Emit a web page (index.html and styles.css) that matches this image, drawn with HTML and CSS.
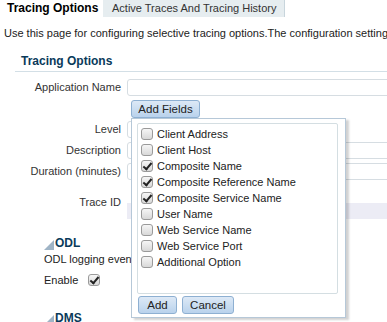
FILE: index.html
```
<!DOCTYPE html>
<html lang="en">
<head>
	<meta charset="UTF-8">
	<title>Tracing Options</title>
	<link rel="stylesheet" href="styles.css">
</head>
<body>
	<div class="tabs">
		<div class="tab active">Tracing Options</div>
		<div class="tab">Active Traces And Tracing History</div>
	</div>
	<p class="intro">Use this page for configuring selective tracing options.The configuration settings are applied to new requests.</p>

	<div class="section">
		<h2 class="sectionTitle">Tracing Options</h2>
		<div class="form">
			<label class="lbl">Application Name</label>
			<div class="field"><div class="input wide"></div></div>

			<div class="lbl"></div>
			<div class="field addRow">
				<button class="btn addFields">Add Fields</button>
				<!-- popup over the form -->
				<div class="popup">
					<ul class="fieldList">
						<li><span class="cb"></span>Client Address</li>
						<li><span class="cb"></span>Client Host</li>
						<li><span class="cb on"></span>Composite Name</li>
						<li><span class="cb on"></span>Composite Reference Name</li>
						<li><span class="cb on"></span>Composite Service Name</li>
						<li><span class="cb"></span>User Name</li>
						<li><span class="cb"></span>Web Service Name</li>
						<li><span class="cb"></span>Web Service Port</li>
						<li><span class="cb"></span>Additional Option</li>
					</ul>
					<div class="popBtns">
						<button class="btn small">Add</button>
						<button class="btn small">Cancel</button>
					</div>
				</div>
			</div>

			<label class="lbl">Level</label>
			<div class="field"><div class="input narrow"></div></div>

			<label class="lbl">Description</label>
			<div class="field"><div class="input wide"></div></div>

			<label class="lbl">Duration (minutes)</label>
			<div class="field"><div class="input wide"></div></div>

			<label class="lbl trace">Trace ID</label>
			<div class="field traceField"><div class="traceBand"></div></div>
		</div>

		<div class="sub">
			<h3 class="subTitle"><svg width="10" height="10" viewBox="0 0 10 10"><polygon points="0,10 10,0 10,10" fill="#9fb4c6"/></svg>ODL</h3>
			<p class="subText">ODL logging events will be written to the server log.</p>
			<div class="enable">Enable <span class="cb on"></span></div>
		</div>

		<div class="sub dms">
			<h3 class="subTitle"><svg width="10" height="10" viewBox="0 0 10 10"><polygon points="0,10 10,0 10,10" fill="#9fb4c6"/></svg>DMS</h3>
		</div>
	</div>
</body>
</html>
```

FILE: styles.css
```
*{
	margin: 0;
	padding: 0;
	box-sizing: border-box;
}
body{
	width: 387px;
	height: 322px;
	overflow: hidden;
	background: #fff;
	font-family: "Liberation Sans", Arial, sans-serif;
	font-size: 11px;
	color: #333;
}
.tabs{
	display: flex;
	height: 17px;
}
.tab{
	flex: none;
	height: 17px;
	line-height: 17px;
	padding: 0 8px 0 9px;
	background: #e6edf0;
	border-right: 1px solid #c8d5dc;
	color: #333;
	font-size: 11px;
	white-space: nowrap;
}
.tab.active{
	width: 103px;
	background: #fff;
	border-right: none;
	font-weight: bold;
	font-size: 12px;
	color: #000;
	padding: 0 0 0 7px;
}
.intro{
	margin-top: 9px;
	padding-left: 4px;
	height: 14px;
	line-height: 14px;
	white-space: nowrap;
	overflow: hidden;
	color: #222;
}
.section{
	margin-top: 14px;
	padding-left: 15px;
}
.sectionTitle{
	height: 18px;
	padding-left: 6px;
	line-height: 14px;
	font-size: 12px;
	font-weight: bold;
	color: #0a3a5a;
	border-bottom: 1px solid #d3dfe6;
}
.form{
	display: grid;
	grid-template-columns: 106px 1fr;
	column-gap: 6px;
	row-gap: 4px;
	margin-top: 7px;
}
.lbl{
	text-align: right;
	height: 17px;
	line-height: 17px;
	color: #333;
	white-space: nowrap;
}
.field{
	height: 17px;
}
.input{
	height: 17px;
	border: 1px solid #d6dde2;
	border-radius: 3px;
	background: #fff;
}
.input.wide{
	width: 300px;
}
.input.narrow{
	width: 60px;
}
.addRow{
	position: relative;
}
.btn{
	font-family: "Liberation Sans", Arial, sans-serif;
	font-size: 11.5px;
	color: #222;
	height: 18px;
	line-height: 15px;
	border: 1px solid #8eb0d2;
	border-radius: 3px;
	background: linear-gradient(#dde9f6, #b9d2ec);
	padding: 0;
	white-space: nowrap;
}
.addFields{
	position: relative;
	z-index: 2;
	margin-left: 4px;
	width: 69px;
}
.popup{
	position: absolute;
	z-index: 1;
	left: 4px;
	top: 18px;
	width: 215px;
	height: 200px;
	background: #fff;
	border: 1px solid #b6c8d8;
	box-shadow: 3px 2px 2px rgba(0,0,0,0.18);
	padding: 4px 7px 0 5px;
}
.fieldList{
	list-style: none;
	height: 171px;
	border: 1px solid #d4dee2;
	border-radius: 2px;
	padding: 2px 0 0 3px;
}
.fieldList li{
	display: flex;
	align-items: center;
	gap: 4px;
	height: 16px;
	font-size: 11px;
	color: #222;
	white-space: nowrap;
}
.cb{
	display: inline-block;
	width: 12px;
	height: 12px;
	border: 1px solid #9a9a9a;
	border-radius: 3px;
	background: linear-gradient(#f6f6f6, #d8d8d8);
	position: relative;
	flex: none;
}
.cb.on::after{
	content: "";
	position: absolute;
	left: 3px;
	top: 0px;
	width: 3px;
	height: 7px;
	border: solid #222;
	border-width: 0 2px 2px 0;
	transform: rotate(40deg);
}
.popBtns{
	display: flex;
	gap: 5px;
	margin-top: 2px;
	padding-left: 1px;
}
.popBtns .btn:first-child{
	width: 39px;
}
.popBtns .btn:last-child{
	width: 52px;
}
.lbl.trace{
	margin-top: 10px;
}
.field.traceField{
	height: auto;
}
.traceBand{
	margin-top: 19px;
	height: 16px;
	background: #ececf5;
}
.sub{
	padding-left: 29px;
	margin-top: 17px;
}
.subTitle{
	display: flex;
	align-items: flex-end;
	gap: 1px;
	height: 14px;
	line-height: 13px;
	font-size: 12px;
	font-weight: bold;
	color: #0a3a5a;
}
.subText{
	margin-top: 1px;
	height: 16px;
	line-height: 16px;
	white-space: nowrap;
	color: #222;
}
.enable{
	margin-top: 5px;
	display: flex;
	align-items: center;
	gap: 10px;
	height: 16px;
	color: #222;
}
.dms{
	margin-top: 23px;
}
```
